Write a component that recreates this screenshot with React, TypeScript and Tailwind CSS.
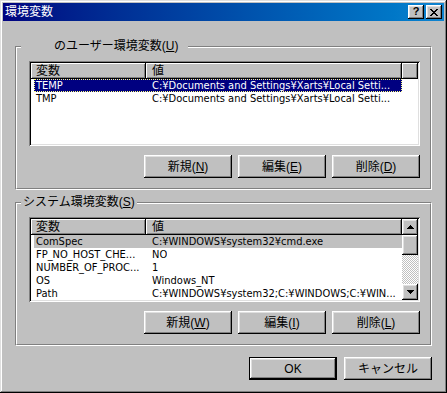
import React from 'react';

type Row = { name: string; value: string };

const userVars: Row[] = [
  { name: 'TEMP', value: 'C:¥Documents and Settings¥Xarts¥Local Setti...' },
  { name: 'TMP', value: 'C:¥Documents and Settings¥Xarts¥Local Setti...' },
];

const systemVars: Row[] = [
  { name: 'ComSpec', value: 'C:¥WINDOWS¥system32¥cmd.exe' },
  { name: 'FP_NO_HOST_CHE...', value: 'NO' },
  { name: 'NUMBER_OF_PROC...', value: '1' },
  { name: 'OS', value: 'Windows_NT' },
  { name: 'Path', value: 'C:¥WINDOWS¥system32;C:¥WINDOWS;C:¥WIN...' },
  { name: 'PATHEXT', value: '.COM;.EXE;.BAT;.CMD;.VBS;.VBE;.JS;.JSE;...' },
];

const raised =
  'shadow-[inset_-1px_-1px_0_#000,inset_1px_1px_0_#fff,inset_-2px_-2px_0_#808080,inset_2px_2px_0_#dfdfdf]';

const Button: React.FC<{ label: string; mnemonic?: string; isDefault?: boolean }> = ({ label, mnemonic, isDefault }) => (
  <button
    className={`w-[88px] h-[23px] flex items-center justify-center bg-[#c0c0c0] text-[12px] text-black leading-none ${
      isDefault ? 'border border-black' : ''
    }`}
  >
    <span className={`w-full h-full flex items-center justify-center ${raised}`}>
      {label}
      {mnemonic && (
        <>
          (<u>{mnemonic}</u>)
        </>
      )}
    </span>
  </button>
);

const GroupBox: React.FC<{ legend: React.ReactNode; children: React.ReactNode }> = ({ legend, children }) => (
  <div className="relative mx-[12px] border border-t-[#808080] border-l-[#808080] border-b-white border-r-white">
    <div className="border border-t-white border-l-white border-b-[#808080] border-r-[#808080] pt-[13px] pl-[12px] pr-[10px] pb-[10px]">
      {children}
    </div>
    <span className="absolute -top-[8px] left-[5px] bg-[#c0c0c0] px-[2px] text-[12px] leading-[14px] whitespace-nowrap">
      {legend}
    </span>
  </div>
);

const HeaderCell: React.FC<{ w: string; children?: React.ReactNode }> = ({ w, children }) => (
  <div
    className={`${w} h-[16px] shrink-0 flex items-center text-[12px] leading-none bg-[#c0c0c0] shadow-[inset_-1px_-1px_0_#000,inset_1px_1px_0_#fff,inset_-2px_-2px_0_#808080]`}
  >
    {children}
  </div>
);

const ListRows: React.FC<{ rows: Row[]; mode: 'focused' | 'inactive' }> = ({ rows, mode }) => (
  <div className="flex flex-col text-[11px] leading-[13px] font-['DejaVu_Sans_Condensed','Liberation_Sans',sans-serif]">
    {rows.map((r, i) => {
      const sel = i === 0;
      const rowCls = sel
        ? mode === 'focused'
          ? 'bg-[#000080] text-white outline outline-1 outline-dotted outline-offset-[-1px] outline-[#ffff7f]'
          : 'bg-[#c0c0c0] text-black'
        : 'text-black';
      return (
        <div key={r.name} className="h-[13px] flex pl-[3px] shrink-0">
          <div className={`w-[368px] h-[13px] flex whitespace-nowrap overflow-hidden ${rowCls}`}>
            <span className="w-[112px] shrink-0 pl-[2px] overflow-hidden">{r.name}</span>
            <span className="pl-[6px] overflow-hidden">{r.value}</span>
          </div>
        </div>
      );
    })}
  </div>
);

const Sunken: React.FC<{ children: React.ReactNode }> = ({ children }) => (
  <div className="h-[85px] bg-white p-[2px] shadow-[inset_1px_1px_0_#808080,inset_-1px_-1px_0_#fff,inset_2px_2px_0_#000,inset_-2px_-2px_0_#dfdfdf]">
    <div className="h-full w-full overflow-hidden flex">{children}</div>
  </div>
);

const Arrow: React.FC<{ up?: boolean }> = ({ up }) => (
  <svg width="7" height="4" viewBox="0 0 7 4" shapeRendering="crispEdges">
    {up ? <path d="M3 0h1v1h1v1h1v1h1v1H0V3h1V2h1V1h1z" fill="#000" /> : <path d="M0 0h7v1H6v1H5v1H4v1H3V3H2V2H1V1H0z" fill="#000" />}
  </svg>
);

const ScrollBar: React.FC = () => (
  <div className="w-[16px] shrink-0 flex flex-col">
    <div className={`h-[16px] flex items-center justify-center bg-[#c0c0c0] ${raised}`}>
      <Arrow up />
    </div>
    <div className={`h-[20px] bg-[#c0c0c0] ${raised}`} />
    <div className="flex-1 bg-[image:repeating-conic-gradient(#c0c0c0_0%_25%,#ffffff_0%_50%)] bg-[length:2px_2px]" />
    <div className={`h-[16px] flex items-center justify-center bg-[#c0c0c0] ${raised}`}>
      <Arrow />
    </div>
  </div>
);

export default function App() {
  return (
    <div className="w-[447px] h-[393px] bg-[#c0c0c0] p-[3px] flex flex-col font-['Liberation_Sans','Noto_Sans_CJK_JP',sans-serif] text-black select-none shadow-[inset_-1px_-1px_0_#000,inset_1px_1px_0_#dfdfdf,inset_-2px_-2px_0_#808080,inset_2px_2px_0_#fff]">
      {/* title bar */}
      <div className="h-[18px] shrink-0 flex items-center pl-[2px] pr-[2px] bg-linear-to-r from-[#000080] to-[#1084d0]">
        <span className="flex-1 text-white text-[12px] leading-none">環境変数</span>
        <div className="flex gap-[2px]">
          <div className={`w-[16px] h-[14px] bg-[#c0c0c0] flex items-center justify-center ${raised}`}>
            <span className="text-[11px] font-bold leading-none font-['Liberation_Sans',sans-serif] -mt-[1px]">?</span>
          </div>
          <div className={`w-[16px] h-[14px] bg-[#c0c0c0] flex items-center justify-center ${raised}`}>
            <svg width="8" height="7" viewBox="0 0 8 7" shapeRendering="crispEdges">
              <path
                d="M0 0h2v1h1v1h2V1h1V0h2v1H7v1H6v1H5v1h1v1h1v1h1v1H6V6H5V5H3v1H2v1H0V6h1V5h1V4h1V3H2V2H1V1H0z"
                fill="#000"
              />
            </svg>
          </div>
        </div>
      </div>

      <div className="mt-[25px]">
        <GroupBox legend={<span className="pl-[31px] pr-[8px]">のユーザー環境変数(<u>U</u>)</span>}>
          <Sunken>
            <div className="flex-1 flex flex-col">
              <div className="flex">
                <HeaderCell w="w-[115px]">
                  <span className="pl-[5px]">変数</span>
                </HeaderCell>
                <HeaderCell w="w-[256px]">
                  <span className="pl-[6px]">値</span>
                </HeaderCell>
                <HeaderCell w="flex-1" />
              </div>
              <ListRows rows={userVars} mode="focused" />
            </div>
          </Sunken>
          <div className="mt-[9px] flex justify-end gap-[6px]">
            <Button label="新規" mnemonic="N" />
            <Button label="編集" mnemonic="E" />
            <Button label="削除" mnemonic="D" />
          </div>
        </GroupBox>
      </div>

      <div className="mt-[12px]">
        <GroupBox legend={<span>システム環境変数(<u>S</u>)</span>}>
          <Sunken>
            <div className="flex-1 flex flex-col min-w-0">
              <div className="flex">
                <HeaderCell w="w-[115px]">
                  <span className="pl-[5px]">変数</span>
                </HeaderCell>
                <HeaderCell w="flex-1">
                  <span className="pl-[6px]">値</span>
                </HeaderCell>
              </div>
              <ListRows rows={systemVars} mode="inactive" />
            </div>
            <ScrollBar />
          </Sunken>
          <div className="mt-[9px] flex justify-end gap-[6px]">
            <Button label="新規" mnemonic="W" />
            <Button label="編集" mnemonic="I" />
            <Button label="削除" mnemonic="L" />
          </div>
        </GroupBox>
      </div>

      <div className="mt-[11px] mr-[12px] flex justify-end gap-[7px]">
        <Button label="OK" isDefault />
        <Button label="キャンセル" />
      </div>
    </div>
  );
}
